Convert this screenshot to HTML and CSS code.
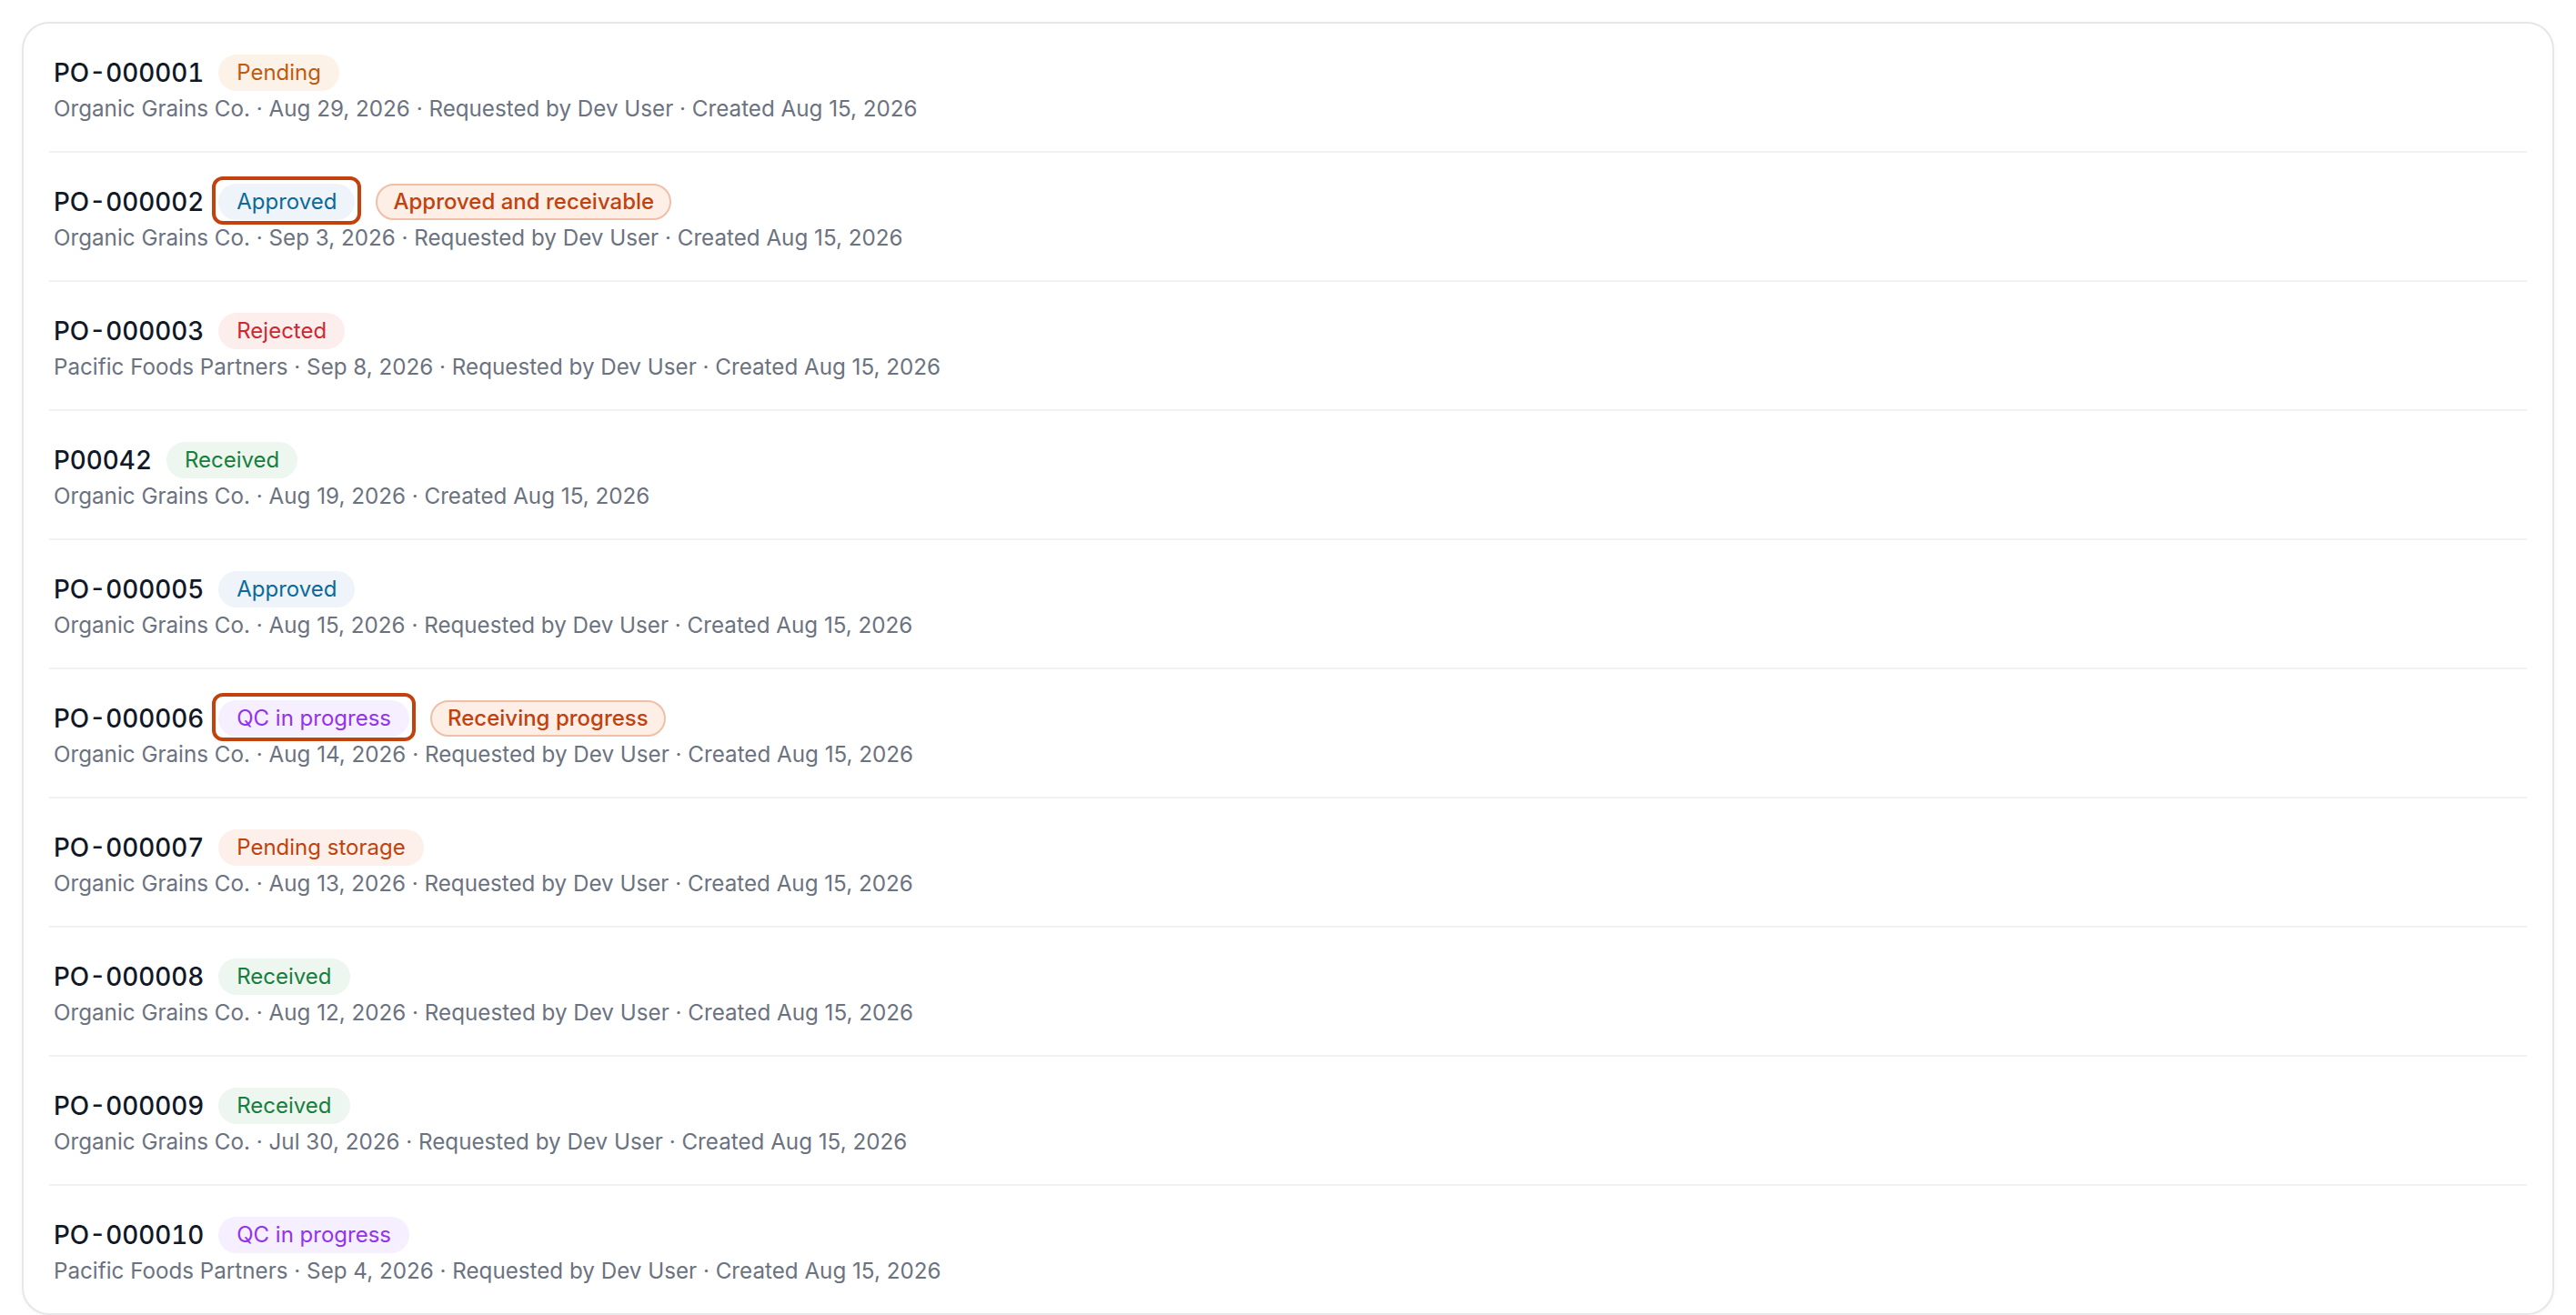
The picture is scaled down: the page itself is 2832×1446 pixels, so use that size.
FILE: index.html
```html
<!DOCTYPE html>
<html lang="en">
<head>
<meta charset="utf-8">
<title>Purchase orders</title>
<link rel="stylesheet" href="styles.css">
</head>
<body>
<div class="card">
  <ul class="list">
    <li class="row">
      <div class="head"><span class="po">PO-000001</span><span class="badge pending">Pending</span></div>
      <div class="meta">Organic Grains Co. · Aug 29, 2026 · Requested by Dev User · Created Aug 15, 2026</div>
    </li>
    <li class="row">
      <div class="head"><span class="po">PO-000002</span><span class="ring"><span class="badge approved">Approved</span></span><span class="badge flag">Approved and receivable</span></div>
      <div class="meta">Organic Grains Co. · Sep 3, 2026 · Requested by Dev User · Created Aug 15, 2026</div>
    </li>
    <li class="row">
      <div class="head"><span class="po">PO-000003</span><span class="badge rejected">Rejected</span></div>
      <div class="meta">Pacific Foods Partners · Sep 8, 2026 · Requested by Dev User · Created Aug 15, 2026</div>
    </li>
    <li class="row">
      <div class="head"><span class="po">P00042</span><span class="badge received">Received</span></div>
      <div class="meta">Organic Grains Co. · Aug 19, 2026 · Created Aug 15, 2026</div>
    </li>
    <li class="row">
      <div class="head"><span class="po">PO-000005</span><span class="badge approved">Approved</span></div>
      <div class="meta">Organic Grains Co. · Aug 15, 2026 · Requested by Dev User · Created Aug 15, 2026</div>
    </li>
    <li class="row">
      <div class="head"><span class="po">PO-000006</span><span class="ring"><span class="badge qc">QC in progress</span></span><span class="badge flag">Receiving progress</span></div>
      <div class="meta">Organic Grains Co. · Aug 14, 2026 · Requested by Dev User · Created Aug 15, 2026</div>
    </li>
    <li class="row">
      <div class="head"><span class="po">PO-000007</span><span class="badge storage">Pending storage</span></div>
      <div class="meta">Organic Grains Co. · Aug 13, 2026 · Requested by Dev User · Created Aug 15, 2026</div>
    </li>
    <li class="row">
      <div class="head"><span class="po">PO-000008</span><span class="badge received">Received</span></div>
      <div class="meta">Organic Grains Co. · Aug 12, 2026 · Requested by Dev User · Created Aug 15, 2026</div>
    </li>
    <li class="row">
      <div class="head"><span class="po">PO-000009</span><span class="badge received">Received</span></div>
      <div class="meta">Organic Grains Co. · Jul 30, 2026 · Requested by Dev User · Created Aug 15, 2026</div>
    </li>
    <li class="row">
      <div class="head"><span class="po">PO-000010</span><span class="badge qc">QC in progress</span></div>
      <div class="meta">Pacific Foods Partners · Sep 4, 2026 · Requested by Dev User · Created Aug 15, 2026</div>
    </li>
  </ul>
</div>
</body>
</html>
```

FILE: styles.css
```css
* { box-sizing: border-box; }

html, body {
  margin: 0;
  padding: 0;
  background: #ffffff;
}

body {
  padding: 24px 24px 0 24px;
  font-family: Inter, "Noto Sans", "Liberation Sans", sans-serif;
  color: #111827;
}

.card {
  background: #ffffff;
  border: 2px solid #e7e7eb;
  border-radius: 30px;
  box-shadow: 0 1px 4px rgba(17, 24, 39, 0.04);
}

.list {
  list-style: none;
  margin: 0;
  padding: 0 28px;
}

.row {
  padding: 34px 4px 28px 5px;
  border-bottom: 2px solid #f1f1f3;
}

.row:last-child {
  border-bottom: none;
}

.head {
  display: flex;
  align-items: center;
  height: 40px;
  gap: 16px;
}

.po {
  font-size: 27.8px;
  font-weight: 500;
  line-height: 40px;
  color: #111827;
  font-variant-numeric: tabular-nums;
}

.meta {
  margin-top: 2px;
  font-size: 24.2px;
  line-height: 36px;
  color: #6b7280;
  white-space: nowrap;
}

.badge {
  display: inline-flex;
  align-items: center;
  height: 40px;
  padding: 0 20px;
  border-radius: 999px;
  font-size: 24px;
  line-height: 1;
  white-space: nowrap;
}

.pending { color: #c05a0e; background: #fdf2e8; }
.storage { color: #c2410c; background: #fdf0ea; }
.approved { color: #0b6a9a; background: #eef4f9; }
.rejected { color: #d0282e; background: #fdeeee; }
.received { color: #15803d; background: #edf6ef; }
.qc { color: #9333ea; background: #f5efff; }

.flag {
  margin-left: 7px;
  padding: 0 17px;
  color: #c2410c;
  background: #fdeee6;
  border: 2px solid #f0bfa7;
  font-weight: 500;
}

.ring {
  position: relative;
  display: inline-flex;
}

.ring::after {
  content: "";
  position: absolute;
  top: -8px;
  bottom: -5px;
  left: -7px;
  right: -7px;
  border: 4px solid #c2410c;
  border-radius: 12px;
  pointer-events: none;
}
```
